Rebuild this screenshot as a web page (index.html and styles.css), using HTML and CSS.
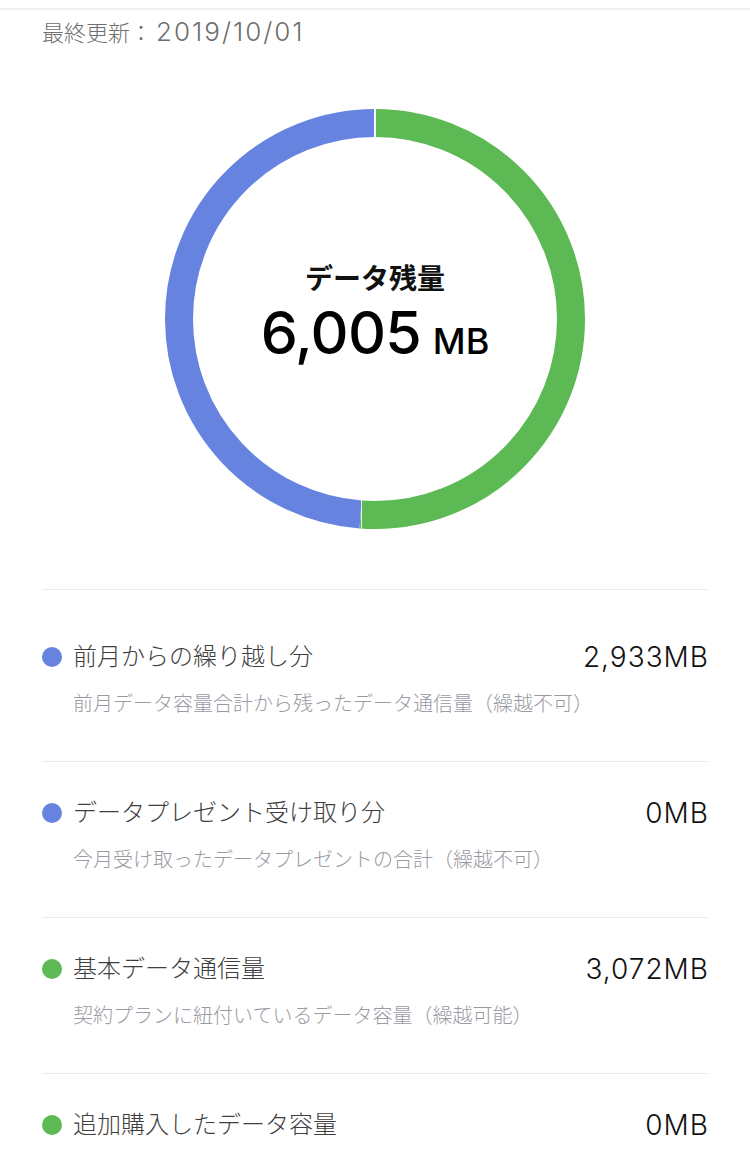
FILE: index.html
```html
<!DOCTYPE html>
<html lang="ja">
<head>
<meta charset="utf-8">
<title>データ残量</title>
<link rel="stylesheet" href="styles.css">
</head>
<body>
<div class="topbar"></div>
<p class="updated">最終更新：<span class="date">2019/10/01</span></p>

<section class="chart">
  <svg class="donut" width="422" height="422" viewBox="0 0 422 422">
    <g transform="rotate(-90 211 211)">
      <circle cx="211" cy="211" r="196" fill="none" stroke="#5cb953" stroke-width="28" stroke-dasharray="630 1232"/>
      <circle cx="211" cy="211" r="196" fill="none" stroke="#6683e0" stroke-width="28" stroke-dasharray="601.5 1232" stroke-dashoffset="-630"/>
    </g>
    <line x1="211" y1="0" x2="211" y2="30" stroke="#ffffff" stroke-width="2"/>
    <line x1="197.5" y1="392" x2="197.5" y2="422" stroke="#e8efe6" stroke-width="1"/>
  </svg>
  <div class="center">
    <div class="center-label">データ残量</div>
    <div class="center-value"><span class="big">6,005</span><span class="unit">MB</span></div>
  </div>
</section>

<ul class="list">
  <li class="row">
    <div class="row-head">
      <span class="dot dot-blue"></span>
      <span class="title">前月からの繰り越し分</span>
      <span class="value">2,933MB</span>
    </div>
    <div class="sub">前月データ容量合計から残ったデータ通信量（繰越不可）</div>
  </li>
  <li class="row">
    <div class="row-head">
      <span class="dot dot-blue"></span>
      <span class="title">データプレゼント受け取り分</span>
      <span class="value">0MB</span>
    </div>
    <div class="sub">今月受け取ったデータプレゼントの合計（繰越不可）</div>
  </li>
  <li class="row">
    <div class="row-head">
      <span class="dot dot-green"></span>
      <span class="title">基本データ通信量</span>
      <span class="value">3,072MB</span>
    </div>
    <div class="sub">契約プランに紐付いているデータ容量（繰越可能）</div>
  </li>
  <li class="row">
    <div class="row-head">
      <span class="dot dot-green"></span>
      <span class="title">追加購入したデータ容量</span>
      <span class="value">0MB</span>
    </div>
  </li>
</ul>
</body>
</html>
```
FILE: styles.css
```css
* {
  box-sizing: border-box;
}

html, body {
  margin: 0;
  padding: 0;
  background: #ffffff;
}

body {
  font-family: "Inter", "Noto Sans CJK JP", sans-serif;
  color: #222222;
  width: 750px;
  overflow: hidden;
}

.topbar {
  height: 10px;
  border-bottom: 2px solid #f0f0f2;
}

.updated {
  margin: 8px 0 0;
  padding: 0 42px;
  font-size: 22px;
  font-weight: 300;
  line-height: 28px;
  color: #6e6e6e;
}

.date {
  padding-left: 4px;
  font-size: 26px;
  letter-spacing: 2px;
}

.chart {
  margin-top: 61px;
  display: grid;
  justify-content: center;
}

.donut,
.center {
  grid-area: 1 / 1;
}

.donut {
  display: block;
}

.center {
  align-self: center;
  justify-self: center;
  display: flex;
  flex-direction: column;
  align-items: center;
  padding-bottom: 12px;
}

.center-label {
  font-size: 28px;
  font-weight: 700;
  line-height: 34px;
  color: #111111;
}

.center-value {
  margin-top: 6px;
  display: flex;
  align-items: baseline;
  gap: 12px;
  color: #000000;
}

.big {
  font-size: 59px;
  font-weight: 500;
  line-height: 62px;
  letter-spacing: -0.8px;
}

.unit {
  font-size: 36px;
  font-weight: 500;
  line-height: 40px;
}

.list {
  list-style: none;
  margin: 59px 42px 0;
  padding: 16px 0 0;
  border-top: 1px solid #ececef;
}

.row {
  height: 156px;
  padding-top: 34px;
  border-bottom: 1px solid #ececef;
}

.row-head {
  display: flex;
  align-items: center;
  height: 34px;
}

.dot {
  width: 20px;
  height: 20px;
  border-radius: 50%;
  flex: none;
  margin-right: 11px;
}

.dot-blue {
  background: #6683e0;
}

.dot-green {
  background: #5cb953;
}

.title {
  flex: 1;
  font-size: 24px;
  font-weight: 300;
  line-height: 34px;
  color: #3e3e3e;
}

.value {
  font-size: 28px;
  font-weight: 300;
  line-height: 34px;
  color: #111111;
  letter-spacing: 1px;
  margin-right: -1px;
}

.sub {
  margin-top: 16px;
  padding-left: 31px;
  font-size: 20px;
  font-weight: 300;
  line-height: 28px;
  color: #9a9aa3;
}
```
